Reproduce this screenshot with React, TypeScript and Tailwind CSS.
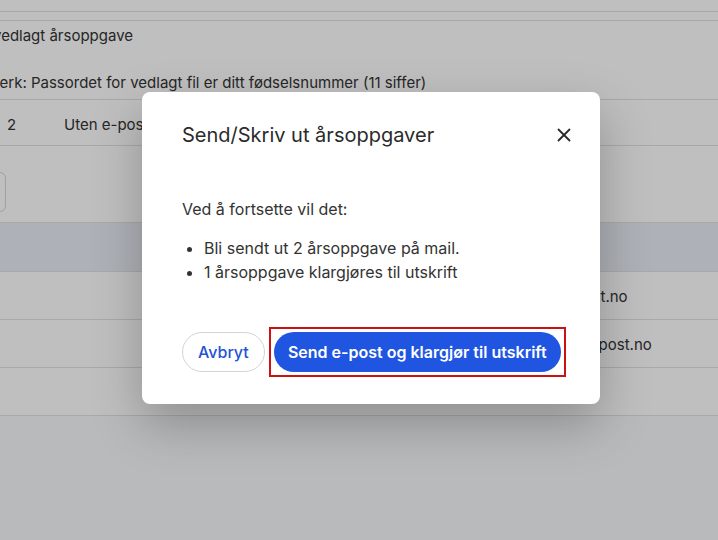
import React from 'react';
import { X } from 'lucide-react';

const font = "font-['Inter','Noto_Sans',sans-serif]";

const App: React.FC = () => {
  return (
    <div className={`relative h-[540px] w-full overflow-hidden bg-[#f7f8fb] text-[#333] ${font}`}>
      {/* Page behind the dialog */}
      <div className="bg-white text-[15px]">
        <div className="h-[12px] border-b border-[#e0e0e0]" />
        <div className="h-[9px] border-b border-[#e0e0e0]" />
        <div className="h-[79px] border-b border-[#e0e0e0] pt-[4px]">
          <p className="-ml-[7px] whitespace-nowrap leading-[22px]">vedlagt årsoppgave</p>
          <p className="-ml-[14px] mt-[25px] whitespace-nowrap leading-[22px]">
            Merk: Passordet for vedlagt fil er ditt fødselsnummer (11 siffer)
          </p>
        </div>
        <div className="flex h-[46px] items-center border-b border-[#e0e0e0] pt-[6px]">
          <span className="w-[64px] pl-[7px]">2</span>
          <span>Uten e-post</span>
        </div>
        <div className="h-[77px] border-b border-[#e0e0e0] pt-[26px]">
          <div className="-ml-[20px] h-[40px] w-[26px] rounded-[6px] border border-[#d6d6d6]" />
        </div>
        <div className="h-[49px] border-b border-[#e0e0e0] bg-[#e8edf5]" />
        <div className="flex h-[48px] items-center border-b border-[#e0e0e0] pt-[4px]">
          <span className="ml-[480px] whitespace-nowrap">olav.hansen@test.no</span>
        </div>
        <div className="flex h-[48px] items-center border-b border-[#e0e0e0] pt-[4px]">
          <span className="ml-[482px] whitespace-nowrap">kari.nordman@epost.no</span>
        </div>
        <div className="h-[48px] border-b border-[#e0e0e0]" />
      </div>

      {/* Dim overlay */}
      <div className="absolute inset-0 bg-black/25" />

      {/* Dialog */}
      <div className="absolute left-[142px] top-[92px] w-[458px] rounded-[8px] bg-white px-10 pb-[27px] pt-[29px] shadow-[0_20px_50px_rgba(0,0,0,0.25)]">
        <div className="flex items-center justify-between">
          <h2 className="text-[20px] leading-[28px] text-[#2b2b2b]">Send/Skriv ut årsoppgaver</h2>
          <button className="-mr-[16px] flex h-6 w-6 items-center justify-center text-[#2b2b2b]">
            <X size={22} strokeWidth={2} />
          </button>
        </div>

        <div className="mt-[48px] text-[16px] leading-[24px] text-[#333]">
          <p>Ved å fortsette vil det:</p>
          <ul className="mt-[15px] list-disc pl-[22px]">
            <li>Bli sendt ut 2 årsoppgave på mail.</li>
            <li>1 årsoppgave klargjøres til utskrift</li>
          </ul>
        </div>

        <div className="mt-[43px] flex items-center gap-[4px]">
          <button className="h-[40px] rounded-full border border-[#d4d4d8] px-[15px] text-[16px] font-medium text-[#2452d6]">
            Avbryt
          </button>
          <span className="border-2 border-[#cc1111] p-[3px]">
            <button className="block h-[40px] w-[287px] whitespace-nowrap rounded-full bg-[#1f55e0] text-[16px] font-semibold text-white">
              Send e-post og klargjør til utskrift
            </button>
          </span>
        </div>
      </div>
    </div>
  );
};

export default App;
